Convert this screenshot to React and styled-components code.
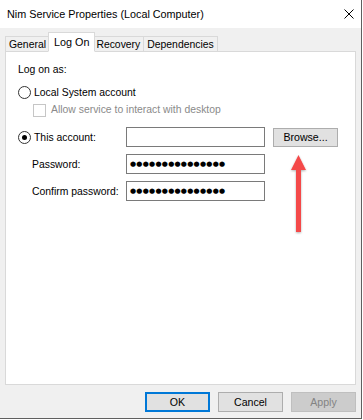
import React from "react";
import styled, { createGlobalStyle } from "styled-components";

const Global = createGlobalStyle`
  html, body { margin: 0; padding: 0; background: #ffffff; }
  body { font-family: "Liberation Sans", Arial, sans-serif; font-size: 10.4px; color: #000; }
`;

const Window = styled.div`
  width: 361px;
  height: 418px;
  border-right: 1px solid #5f5f5f;
  border-bottom: 1px solid #5f5f5f;
  background: #f0f0f0;
  display: flex;
  flex-direction: column;
  position: relative;
`;

const TitleBar = styled.div`
  height: 28px;
  background: #ffffff;
  display: flex;
  align-items: center;
  justify-content: space-between;
  padding: 0 7px 0 7px;
`;

const Title = styled.span`
  font-size: 10.8px;
  color: #000;
`;

const CloseBtn = styled.svg`
  width: 10px;
  height: 10px;
`;

const Body = styled.div`
  flex: 1;
  display: flex;
  flex-direction: column;
  padding: 4px 5px 0 5px;
`;

const TabRow = styled.div`
  display: flex;
  align-items: flex-end;
  height: 20px;
  position: relative;
  z-index: 1;
  margin-bottom: -1px;
`;

const Tab = styled.div`
  height: ${(p) => (p.$active ? "20px" : "16px")};
  padding: 0 ${(p) => (p.$active ? "5px" : "3px")};
  margin: 0 ${(p) => (p.$active ? "-2px" : "0")};
  border: 1px solid #d9d9d9;
  border-bottom: ${(p) => (p.$active ? "1px solid #ffffff" : "1px solid #d9d9d9")};
  border-left-width: ${(p) => (p.$first || p.$active ? "1px" : "0")};
  background: ${(p) => (p.$active ? "#ffffff" : "#f0f0f0")};
  display: flex;
  align-items: center;
  font-size: ${(p) => (p.$active ? "10.8px" : "10.4px")};
  white-space: nowrap;
  box-sizing: border-box;
  position: relative;
  z-index: ${(p) => (p.$active ? 2 : 1)};
`;

const Panel = styled.div`
  height: 334px;
  background: #ffffff;
  border: 1px solid #d9d9d9;
  box-sizing: border-box;
  padding: 11px 12px 0 12px;
  display: flex;
  flex-direction: column;
  position: relative;
`;

const Text = styled.div`
  height: 14px;
  line-height: 14px;
  white-space: nowrap;
  color: ${(p) => (p.$disabled ? "#8a8a8a" : "#000")};
`;

const OptionRow = styled.div`
  display: flex;
  align-items: center;
  gap: 3px;
  height: 14px;
  white-space: nowrap;
  margin-top: ${(p) => p.$mt || 0}px;
  padding-left: ${(p) => p.$indent || 0}px;
`;

const Radio = styled.span`
  width: 11px;
  height: 11px;
  flex: none;
  border: 1px solid #333;
  border-radius: 50%;
  display: inline-flex;
  align-items: center;
  justify-content: center;
  background: #fff;
  &::after {
    content: "";
    width: 5px;
    height: 5px;
    border-radius: 50%;
    background: ${(p) => (p.$checked ? "#000" : "transparent")};
  }
`;

const Checkbox = styled.span`
  width: 11px;
  height: 11px;
  flex: none;
  border: 1px solid #c6c6c6;
  background: #fff;
  margin-right: 2px;
`;

const AccountGrid = styled.div`
  display: grid;
  grid-template-columns: 100px 139px 65px;
  column-gap: 8px;
  row-gap: 7px;
  grid-auto-rows: 20px;
  margin-top: 10px;
  align-items: center;
`;

const Label = styled.div`
  padding-left: ${(p) => p.$indent || 0}px;
  display: flex;
  align-items: center;
  gap: 3px;
  white-space: nowrap;
`;

const Input = styled.div`
  height: 20px;
  box-sizing: border-box;
  border: 1px solid #7a7a7a;
  background: #fff;
  display: flex;
  align-items: center;
  padding-left: 3px;
`;

const Dots = styled.span`
  font-family: "DejaVu Sans", sans-serif;
  font-size: 7px;
  letter-spacing: 0.25px;
  color: #000;
`;

const Button = styled.button`
  width: 65px;
  height: ${(p) => p.$h || 20}px;
  box-sizing: border-box;
  border: 1px solid ${(p) => (p.$default ? "#0078d7" : p.$disabled ? "#bfbfbf" : "#adadad")};
  box-shadow: ${(p) => (p.$default ? "inset 0 0 0 1px #0078d7" : "none")};
  background: ${(p) => (p.$disabled ? "#cccccc" : "#e1e1e1")};
  color: ${(p) => (p.$disabled ? "#838383" : "#000")};
  font-family: "Liberation Sans", Arial, sans-serif;
  font-size: 10.6px;
  padding: 0;
  margin: 0;
`;

const ButtonRow = styled.div`
  display: flex;
  justify-content: flex-end;
  gap: 8px;
  margin-top: 7px;
`;

const Arrow = styled.svg`
  position: absolute;
  left: 283px;
  top: 103px;
  overflow: visible;
`;

export default function App() {
  const dots = "●●●●●●●●●●●●●●●";
  return (
    <>
      <Global />
      <Window>
        <TitleBar>
          <Title>Nim Service Properties (Local Computer)</Title>
          <CloseBtn viewBox="0 0 10 10">
            <path d="M0.5 0.5 L9.5 9.5 M9.5 0.5 L0.5 9.5" stroke="#000" strokeWidth="1" fill="none" />
          </CloseBtn>
        </TitleBar>
        <Body>
          <TabRow>
            <Tab $first>General</Tab>
            <Tab $active>Log On</Tab>
            <Tab>Recovery</Tab>
            <Tab>Dependencies</Tab>
          </TabRow>
          <Panel>
            <Text>Log on as:</Text>
            <OptionRow $mt={8}>
              <Radio />
              <span>Local System account</span>
            </OptionRow>
            <OptionRow $mt={4} $indent={15}>
              <Checkbox />
              <Text $disabled>Allow service to interact with desktop</Text>
            </OptionRow>
            <AccountGrid>
              <Label>
                <Radio $checked />
                <span>This account:</span>
              </Label>
              <Input />
              <Button $h={19}>Browse...</Button>
              <Label $indent={14}>Password:</Label>
              <Input>
                <Dots>{dots}</Dots>
              </Input>
              <span />
              <Label $indent={14}>Confirm password:</Label>
              <Input>
                <Dots>{dots}</Dots>
              </Input>
              <span />
            </AccountGrid>
            <Arrow width="20" height="80" viewBox="0 0 20 80">
              <defs>
                <filter id="sh" x="-50%" y="-20%" width="200%" height="140%">
                  <feDropShadow dx="0" dy="1" stdDeviation="1.2" floodColor="#000" floodOpacity="0.3" />
                </filter>
              </defs>
              <g filter="url(#sh)">
                <polygon points="9.5,0 17,15 12,15 12,77 7,77 7,15 2,15" fill="#f44848" />
              </g>
            </Arrow>
          </Panel>
          <ButtonRow>
            <Button $default>OK</Button>
            <Button>Cancel</Button>
            <Button $disabled>Apply</Button>
          </ButtonRow>
        </Body>
      </Window>
    </>
  );
}
